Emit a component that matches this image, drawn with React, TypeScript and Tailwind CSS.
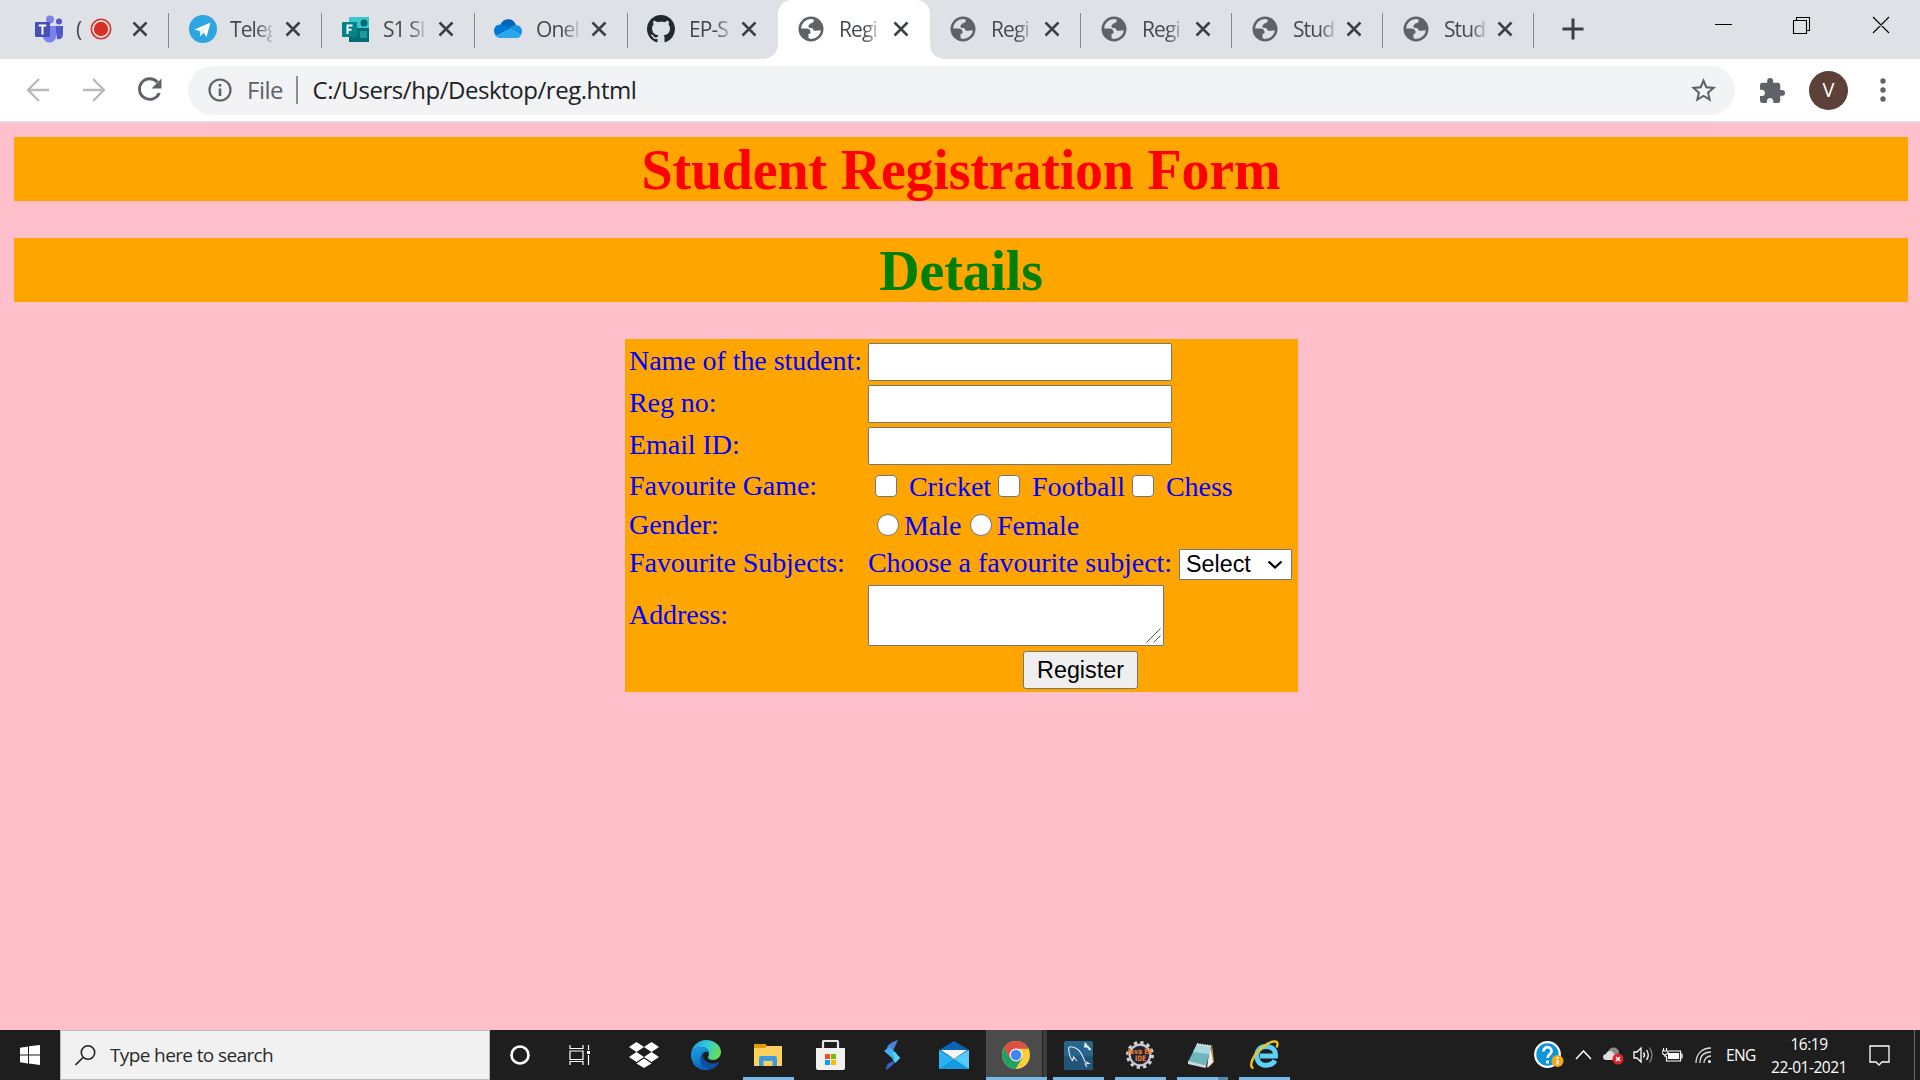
import React from "react";

function Globe() {
  return (
    <svg viewBox="0 0 24 24" className="-ml-0.5 block h-[30px] w-[30px]" fill="#5f6368">
      <circle cx="12" cy="12" r="9" fill="none" stroke="#5f6368" strokeWidth="2" />
      <path d="M14 3.500c.6 2.300 0 3.400-2 3.800-1.500.3-1.200 1.700-2.200 2.200.3 1.500 1.300 1.800 2.900 1.700 1 0 .8 1.900 2.200 2.200 1.900.4 3.700-.7 5.600-.4C21.500 8.500 18.500 4 14 3.500z" />
      <path d="M3 11.500h5.500c2 0 3 1.300 3.200 2.900.1 1-.5 1.600-1.700 1.600v3.200c.6.500 1.300.8 2 1.300C6.500 20.800 2.800 17 3 11.500z" />
    </svg>
  );
}

function Teams() {
  return (
    <svg viewBox="0 0 28 28" className="block h-7 w-7">
      <circle cx="15" cy="4.500" r="4" fill="#7b83eb" />
      <circle cx="24" cy="6.500" r="3" fill="#5059c9" />
      <path d="M20 11h8v8c0 4-2.500 6-6 5z" fill="#5059c9" />
      <path d="M8 11h13v10c0 4-3 6.500-6.500 6.500S8 25 8 21z" fill="#7b83eb" />
      <rect x="0" y="7" width="15" height="15" rx="1" fill="#464eb8" />
      <path d="M3.700 10.500h7.600M7.500 10.500v9" stroke="#fff" strokeWidth="2" />
    </svg>
  );
}

function Telegram() {
  return (
    <svg viewBox="0 0 28 28" className="-ml-px block h-7 w-7">
      <circle cx="14" cy="14" r="14" fill="#2ca5e0" />
      <path d="M5.500 14.500 21.500 7.500 17.500 22l-3-4.500-3 4-.800-5.500z" fill="#fff" />
      <path d="m11 16 6.500-4.500-4 5-2 4.500z" fill="#d5e9f5" />
    </svg>
  );
}

function Forms() {
  return (
    <svg viewBox="0 0 28 26" className="-ml-px block h-[26px] w-7">
      <path d="M7 1h20v25H7z" fill="#036c70" />
      <path d="M7 1h20v11H7z" fill="#37c6d0" />
      <circle cx="22" cy="7" r="3.500" fill="#036c70" />
      <rect x="18" y="15" width="7" height="7" fill="#1a9ba1" />
      <rect x="0" y="6" width="15" height="15" rx="1" fill="#038387" />
      <path d="M5.500 18v-8.500h5M5.500 13.700h4" stroke="#fff" strokeWidth="2" fill="none" />
    </svg>
  );
}

function OneDrive() {
  return (
    <svg viewBox="0 0 28 19" className="-ml-[3px] block h-[19px] w-7">
      <path d="M6.500 5.500c3-7 13-7.500 15.500.8L15 10z" fill="#0364b8" />
      <path d="M6.500 5.500C9.500 5 11 6 17 9.500L2 17C-2 12 .5 5.500 6.500 5.500z" fill="#0078d4" />
      <path d="M22 6.300c5-.3 7.500 5.500 5 9.700l-12-7c2-1.800 4-2.700 7-2.700z" fill="#1490df" />
      <path d="m2 17 14.500-7.500L27 16c-1 2-2 3-4 3H6c-2 0-3-1-4-2z" fill="#28a8ea" />
    </svg>
  );
}

function Github() {
  return (
    <svg viewBox="0 0 16 16" className="-ml-[3px] block h-7 w-7" fill="#24292e">
      <path d="M8 0C3.580 0 0 3.580 0 8c0 3.540 2.290 6.530 5.470 7.590.4.070.55-.17.55-.38 0-.19-.01-.82-.01-1.490-2.010.37-2.530-.49-2.690-.94-.09-.23-.48-.94-.82-1.130-.28-.15-.68-.52-.01-.53.63-.01 1.080.58 1.230.82.72 1.210 1.870.87 2.330.66.07-.52.28-.87.51-1.070-1.780-.2-3.640-.89-3.640-3.950 0-.87.31-1.590.82-2.150-.08-.2-.36-1.020.08-2.120 0 0 .67-.21 2.200.82.64-.18 1.320-.27 2-.27s1.360.09 2 .27c1.530-1.040 2.200-.82 2.200-.82.44 1.100.16 1.920.08 2.120.51.56.82 1.270.82 2.150 0 3.070-1.870 3.750-3.650 3.950.29.25.54.73.54 1.480 0 1.070-.01 1.930-.01 2.200 0 .21.15.46.55.38A8.010 8.010 0 0 0 16 8c0-4.420-3.580-8-8-8z" />
    </svg>
  );
}

function Recording() {
  return (
    <svg viewBox="0 0 22 22" className="ml-1.5 block h-[22px] w-[22px] shrink-0">
      <circle cx="11" cy="11" r="9.700" fill="none" stroke="#d93025" strokeWidth="1.600" />
      <circle cx="11" cy="11" r="7.200" fill="#d93025" />
    </svg>
  );
}

function Close() {
  return (
    <svg viewBox="0 0 16 16" className="block h-4 w-4 shrink-0">
      <path d="M1.500 1.500l13 13M14.500 1.500l-13 13" stroke="#3c4043" strokeWidth="2.500" />
    </svg>
  );
}

interface TabProps {
  icon: React.ReactNode;
  title: string;
  width: string;
  titleWidth?: string;
  separator?: boolean;
  active?: boolean;
  recording?: boolean;
}

function Tab({ icon, title, width, titleWidth = "w-[42px]", separator, active, recording }: TabProps) {
  return (
    <div className={`relative flex h-[59px] shrink-0 items-center pb-0.5 pl-5 pr-[21px] ${width} ${active ? "rounded-t-[14px] bg-white" : ""}`}>
      {active && (
        <>
          <span className="absolute -left-3.5 bottom-0 h-3.5 w-3.5 bg-[radial-gradient(circle_at_0_0,#dee1e6_13.5px,#fff_14px)]" />
          <span className="absolute -right-3.5 bottom-0 h-3.5 w-3.5 bg-[radial-gradient(circle_at_100%_0,#dee1e6_13.5px,#fff_14px)]" />
        </>
      )}
      <span className="flex w-7 shrink-0 justify-center">{icon}</span>
      <span className={`ml-[13px] overflow-hidden whitespace-nowrap [mask-image:linear-gradient(90deg,#000_62%,rgba(0,0,0,0.2))] ${titleWidth}`}>{title}</span>
      {recording && <Recording />}
      <span className="ml-auto"><Close /></span>
      {separator && <span className="absolute right-0 top-[13px] h-[35px] w-[1.5px] bg-[#85898e]" />}
    </div>
  );
}

function TabStrip() {
  return (
    <div className="flex h-[59px] bg-[#dee1e6] pl-[15px] font-['Open_Sans',sans-serif] text-[21px] leading-7 tracking-[-0.9px] text-[#45494d]">
      <Tab icon={<Teams />} title="(" width="w-[154px]" titleWidth="w-[8px]" recording separator />
      <Tab icon={<Telegram />} title="Teleg" width="w-[153px]" separator />
      <Tab icon={<Forms />} title="S1 Sl" width="w-[153px]" separator />
      <Tab icon={<OneDrive />} title="OneD" width="w-[153px]" separator />
      <Tab icon={<Github />} title="EP-S" width="w-[150px]" />
      <Tab icon={<Globe />} title="Regi" width="w-[152px]" titleWidth="w-[40px]" active />
      <Tab icon={<Globe />} title="Regi" width="w-[151px]" titleWidth="w-[40px]" separator />
      <Tab icon={<Globe />} title="Regi" width="w-[151px]" titleWidth="w-[40px]" separator />
      <Tab icon={<Globe />} title="Stud" width="w-[151px]" titleWidth="w-[42px]" separator />
      <Tab icon={<Globe />} title="Stud" width="w-[151px]" titleWidth="w-[42px]" separator />
      <svg viewBox="0 0 22 22" className="ml-7 mt-[18px] block h-[22px] w-[22px]">
        <path d="M11 0.500v21M.500 11h21" stroke="#3c4043" strokeWidth="3" />
      </svg>
      <svg viewBox="0 0 176 18" className="ml-auto mr-[30px] mt-4 block h-[18px] w-[176px]" fill="none" stroke="#000" strokeWidth="1.100">
        <path d="M1 8.500h17M79.500 4.500h13v13h-13zM82.500 4.500v-3h13v13h-3M159 1l16 16M175 1l-16 16" />
      </svg>
    </div>
  );
}

function Toolbar() {
  return (
    <div className="flex h-16 items-center border-b-2 border-[#d9dce0] bg-white pl-[26px] font-['Open_Sans',sans-serif] text-[24px]">
      <svg viewBox="0 0 24 26" className="block h-[26px] w-6" fill="none" stroke="#bababc" strokeWidth="2.400">
        <path d="M23 13H2M13 2 2 13l11 11" />
      </svg>
      <svg viewBox="0 0 24 26" className="ml-8 block h-[26px] w-6" fill="none" stroke="#bababc" strokeWidth="2.400">
        <path d="M1 13h21M11 2l11 11-11 11" />
      </svg>
      <svg viewBox="0 0 26 28" className="ml-[31px] block h-7 w-[26px]">
        <path d="M20.500 6.200A10.300 10.300 0 1 0 22.300 17" fill="none" stroke="#5f6368" strokeWidth="2.900" />
        <path d="M24.500 2.500v10h-10z" fill="#5f6368" />
      </svg>
      <div className="ml-[25px] flex h-[49px] w-[1547px] items-center rounded-full bg-[#f1f3f4] pl-5 pr-[19px]">
        <svg viewBox="0 0 24 24" className="block h-6 w-6" fill="none" stroke="#5f6368" strokeWidth="2.200">
          <circle cx="12" cy="12" r="10.500" />
          <path d="M12 10.500V18M12 6v2.400" strokeWidth="2.600" />
        </svg>
        <span className="ml-[15px] w-[38px] whitespace-nowrap text-[#5f6368] tracking-[-0.5px]">File</span>
        <span className="ml-[11px] h-7 w-[1.5px] bg-[#8b8f94]" />
        <span className="ml-[15px] whitespace-nowrap text-[#202124] tracking-[-0.45px]">C:/Users/hp/Desktop/reg.html</span>
        <svg viewBox="2 2 20 20" className="ml-auto block h-[25px] w-[25px]" fill="#5f6368">
          <path d="M22 9.240l-7.190-.62L12 2 9.190 8.630 2 9.240l5.460 4.730L5.820 21 12 17.270 18.180 21l-1.630-7.030L22 9.240zM12 15.400l-3.760 2.270 1-4.280-3.320-2.880 4.380-.38L12 6.100l1.710 4.040 4.380.38-3.320 2.880 1 4.280L12 15.400z" />
        </svg>
      </div>
      <svg viewBox="2 1 21 21" className="ml-[25px] block h-[25px] w-[25px]" fill="#5f6368">
        <path d="M20.500 11H19V7c0-1.100-.9-2-2-2h-4V3.500a2.500 2.500 0 0 0-5 0V5H4c-1.100 0-1.990.9-1.990 2v3.800H3.500c1.490 0 2.700 1.210 2.700 2.700s-1.210 2.700-2.700 2.700H2V20c0 1.100.9 2 2 2h3.800v-1.500c0-1.490 1.210-2.700 2.700-2.700 1.490 0 2.700 1.210 2.700 2.700V22H17c1.100 0 2-.9 2-2v-4h1.500a2.500 2.500 0 0 0 0-5z" />
      </svg>
      <span className="ml-6 flex h-[39px] w-[39px] items-center justify-center rounded-full bg-[#5d4037] text-[20px] text-white">V</span>
      <svg viewBox="0 0 6 28" className="ml-8 block h-7 w-1.5" fill="#5f6368">
        <circle cx="3" cy="5" r="2.700" />
        <circle cx="3" cy="14" r="2.700" />
        <circle cx="3" cy="23" r="2.700" />
      </svg>
    </div>
  );
}

interface RowProps {
  label: string;
  height: string;
  raised?: boolean;
  children: React.ReactNode;
}

function Row({ label, height, raised, children }: RowProps) {
  return (
    <div className={`flex items-center pl-1 ${height}`}>
      <label className={`w-[239px] shrink-0 whitespace-nowrap ${raised ? "pb-0.5" : ""}`}>{label}</label>
      {children}
    </div>
  );
}

const fieldClass = "h-[38px] w-[304px] rounded-[2px] border-[1.5px] border-[#767676] bg-white px-1 outline-none";

function Check() {
  return <input type="checkbox" className="h-[22px] w-[22px] shrink-0 appearance-none rounded-[4px] border-[1.5px] border-[#767676] bg-white" />;
}

function Radio() {
  return <input type="radio" name="gender" className="h-[22px] w-[22px] shrink-0 appearance-none rounded-full border-[1.5px] border-[#767676] bg-white" />;
}

function RegistrationPage() {
  return (
    <main className="flex h-[907px] flex-col bg-[#ffc0cb] pl-3.5 pr-3 pt-3.5 font-['Liberation_Serif',serif] text-[28px] leading-8 tracking-[-0.06px] text-[#0000ff]">
      <h1 className="h-16 bg-[#ffa500] text-center text-[56px] font-bold leading-[66px] tracking-[-0.2px] text-[#ff0000]">Student Registration Form</h1>
      <h1 className="mt-[37px] h-16 bg-[#ffa500] text-center text-[56px] font-bold leading-[66px] tracking-[-0.2px] text-[#008000]">Details</h1>
      <form className="ml-[611px] mt-[37px] flex h-[353px] w-[673px] flex-col bg-[#ffa500] pt-0.5" onSubmit={(e) => e.preventDefault()}>
        <Row label="Name of the student:" height="h-[42px]" raised><input className={fieldClass} /></Row>
        <Row label="Reg no:" height="h-[42px]" raised><input className={fieldClass} /></Row>
        <Row label="Email ID:" height="h-[42px]" raised><input className={fieldClass} /></Row>
        <Row label="Favourite Game:" height="h-[38px]">
          <div className="flex items-center pl-[7px]">
            <Check /><span className="ml-3 mt-px w-[89px]">Cricket</span>
            <Check /><span className="ml-3 mt-px w-[100px]">Football</span>
            <Check /><span className="ml-3 mt-px">Chess</span>
          </div>
        </Row>
        <Row label="Gender:" height="h-[39px]">
          <div className="flex items-center pl-[9px]">
            <Radio /><span className="ml-[5px] mt-0.5 w-[66px]">Male</span>
            <Radio /><span className="ml-[5px] mt-0.5">Female</span>
          </div>
        </Row>
        <Row label="Favourite Subjects:" height="h-[39px]" raised>
          <span className="w-[311px] whitespace-nowrap pb-0.5">Choose a favourite subject:</span>
          <button type="button" className="mt-0.5 flex h-[31px] w-[113px] items-center justify-between rounded-[1px] border-[1.5px] border-[#767676] bg-white pl-1.5 pr-2 font-['Liberation_Sans',sans-serif] text-[23.330px] leading-none tracking-normal text-black">
            Select
            <svg viewBox="0 0 16 10" className="block h-[10px] w-4" fill="none" stroke="#000" strokeWidth="2.300">
              <path d="m1.500 1.500 6.500 6 6.500-6" />
            </svg>
          </button>
        </Row>
        <Row label="Address:" height="h-[65px]" raised>
          <div className="flex h-[61px] w-[296px] items-end justify-end rounded-[1px] border-[1.5px] border-[#767676] bg-white p-0.5">
            <svg viewBox="0 0 15 15" className="block h-[15px] w-[15px]" stroke="#555" strokeWidth="1">
              <path d="M.500 14.500 14.500.500M7.500 14.500l7-7" />
            </svg>
          </div>
        </Row>
        <button type="submit" className="ml-[398px] mt-[3px] h-[38px] w-[115px] rounded-[3px] border-[1.5px] border-[#767676] bg-[#efefef] pt-0.5 font-['Liberation_Sans',sans-serif] text-[23.330px] leading-none tracking-normal text-black">Register</button>
      </form>
    </main>
  );
}

function Dropbox() {
  return (
    <svg viewBox="0 0 30 26" className="h-[26px] w-[30px]" fill="#fff">
      <path d="m7.500 0 7.500 5-7.500 5L0 5zM22.500 0 30 5l-7.500 5L15 5zM7.500 10l7.500 5-7.500 5L0 15zM22.500 10l7.500 5-7.500 5-7.500-5zM15 16.500l7.500 5-7.500 4.500-7.500-4.500z" />
    </svg>
  );
}

function Edge() {
  return (
    <svg viewBox="0 0 30 30" className="h-[30px] w-[30px]">
      <defs>
        <linearGradient id="edgeTop" x1="0" y1="0.200" x2="1" y2="0.500">
          <stop offset="0" stopColor="#229ddb" /><stop offset="0.500" stopColor="#31c8dc" /><stop offset="1" stopColor="#66e052" />
        </linearGradient>
        <linearGradient id="edgeSide" x1="0" y1="0" x2="0.400" y2="1">
          <stop offset="0" stopColor="#1ca5e6" /><stop offset="1" stopColor="#0b64bd" />
        </linearGradient>
      </defs>
      <path d="M0 14C1 5 8 0 15 0c9 0 15 6 15 12 0 5-4 8-8 8-3 0-5-1-5-2.500 0-1 1-1.500 1-4C18 9 14 7 10 7 5 7 1 10 0 14z" fill="url(#edgeTop)" />
      <path d="M0 15C0 10 5 7 10 7c4 0 8 2 8 6-3-3-8 0-7 6 1 5 5 8 9 10C9 33 0 25 0 15z" fill="url(#edgeSide)" />
      <path d="M11.500 13c-5 6-1 16 7.500 16 4 0 7-3 9-6 0-1-.5-1-1-.7C19 26 11 21 11.500 13z" fill="#104f9e" />
    </svg>
  );
}

function Explorer() {
  return (
    <svg viewBox="0 0 28 24" className="h-6 w-7">
      <path d="M0 1h11l2 2h15v20H0z" fill="#ffd15c" />
      <path d="M0 1h11l2 2-2 2H0z" fill="#e09b00" />
      <path d="M5 23V15q0-2 2-2h14q2 0 2 2v8h-4.500v-5h-9v5z" fill="#3d9be0" />
    </svg>
  );
}

function Store() {
  return (
    <svg viewBox="0 0 29 30" className="h-[30px] w-[29px]">
      <path d="M7 12V2q0-1 1-1h13q1 0 1 1v10" fill="none" stroke="#e6e6e6" strokeWidth="2.200" />
      <path d="M0 8h29v20q0 2-2 2H2q-2 0-2-2z" fill="#f1f1f1" />
      <path d="M9 14h5v5H9z" fill="#f25022" /><path d="M15 14h5v5h-5z" fill="#7fba00" />
      <path d="M9 20h5v5H9z" fill="#00a4ef" /><path d="M15 20h5v5h-5z" fill="#ffb900" />
    </svg>
  );
}

function Swirl() {
  return (
    <svg viewBox="0 0 16 30" className="h-[30px] w-4">
      <path d="M14 0C8 2 4 4 3 8l-1 2 7 1z" fill="#4a7fd8" />
      <path d="m0 11 6-4 4 4 6 7-5 5-3-5z" fill="#3fb0f0" />
      <path d="m8 13 3-1 5 6-5 5-2-3 2-2z" fill="#4bd9f0" />
      <path d="M2 30c0-5 2-8 9-9-1 3-4 6-9 9z" fill="#3a62c8" />
    </svg>
  );
}

function Mail() {
  return (
    <svg viewBox="0 0 30 28" className="-ml-0.5 h-7 w-[30px]">
      <path d="M0 9 15 0l15 9v4H0z" fill="#0a63b5" />
      <path d="M0 9v19h30V9L15 18z" fill="#29b3f0" />
      <path d="m2 9 13 9 13-9z" fill="#f4f4f4" />
      <path d="M30 9v19L15 18z" fill="#55cbfa" />
      <path d="m0 28 15-10 15 10z" fill="#149be2" />
    </svg>
  );
}

function Chrome() {
  return (
    <svg viewBox="0 0 28 28" className="h-7 w-7">
      <circle cx="14" cy="14" r="14" fill="#ffcd40" />
      <path d="M14 14 1.900 7A14 14 0 0 0 13.500 28L20 17.500z" fill="#1da362" />
      <path d="M1.900 7A14 14 0 0 1 26.500 7.700H14L8 17.500z" fill="#dd5144" />
      <circle cx="14" cy="14" r="6.500" fill="#f1f1f1" />
      <circle cx="14" cy="14" r="5.200" fill="#4285f4" />
    </svg>
  );
}

function MySql() {
  return (
    <svg viewBox="0 0 29 29" className="h-[29px] w-[29px]">
      <rect width="29" height="29" rx="2" fill="#28658c" />
      <path d="M0 15h29v12q0 2-2 2H2q-2 0-2-2z" fill="#205579" />
      <path d="M8.500 20C6 17 4 9 5 6.500 7 4.500 12 7 15 9.500c4 4 4 8 6 11l4 2-4 .5 2 3M8.500 20l1-4 3.500 4" fill="none" stroke="#dbe9f2" strokeWidth="1.100" />
      <path d="M21 2l1.500 3.500M20 5.500h3.500l3 3.500" fill="none" stroke="#eef5f9" strokeWidth="2" />
    </svg>
  );
}

function JavaEE() {
  return (
    <svg viewBox="0 0 28 28" className="h-7 w-7 overflow-visible">
      <circle cx="14" cy="14" r="12.500" fill="none" stroke="#d3d3d3" strokeWidth="3" strokeDasharray="3.270 3.270" />
      <circle cx="14" cy="14" r="10.300" fill="#272039" stroke="#c9c9c9" strokeWidth="2.200" />
      <text x="14" y="13.300" textAnchor="middle" fontSize="7.500" fontWeight="bold" fontFamily="DejaVu Sans" textLength="25" lengthAdjust="spacingAndGlyphs" fill="#e8842c">Java EE</text>
      <text x="14.500" y="20" textAnchor="middle" fontSize="7.500" fontWeight="bold" fontFamily="DejaVu Sans" textLength="11" lengthAdjust="spacingAndGlyphs" fill="#e8842c">IDE</text>
    </svg>
  );
}

function Notepad() {
  return (
    <svg viewBox="0 0 28 27" className="-ml-0.5 h-[27px] w-7">
      <path d="m25 2 2 18-6 6z" fill="#c4974b" />
      <path d="m23 4 3 16-6 6z" fill="#f0f0ea" />
      <path d="M10 2 24 4l-5 21L1 20z" fill="#6fb6bd" />
      <path d="M10 2 24 4l-1.800 8L6 10z" fill="#a9d9dc" />
      <path d="m1 19 18 4.500-.5 2.500L1 22z" fill="#d2d9db" />
      <path d="m10 2 14 2" stroke="#e9f1f2" strokeWidth="1.800" strokeDasharray="1.500 1" />
    </svg>
  );
}

function InternetExplorer() {
  return (
    <svg viewBox="0 0 29 30" className="h-[30px] w-[29px]">
      <path d="M25 20.500C22 26 12 27.500 8 21 4.500 13 9 6.500 16 6.500c7 0 10 4.500 9.500 9.500H10" fill="none" stroke="#5fd0f7" strokeWidth="5" />
      <path d="M3.500 28C-2 27 3 14 13 7 20 1 27 0 27.500 3.500c.3 1.500-.5 3-1 4" fill="none" stroke="#f0c31e" strokeWidth="2.400" />
    </svg>
  );
}

function TaskItem({ width, bar, active, children }: { width: string; bar?: string; active?: boolean; children: React.ReactNode }) {
  return (
    <div className={`relative flex h-[50px] shrink-0 items-center justify-center ${width} ${active ? "bg-[#4b4b4b]" : ""}`}>
      {children}
      {bar && <span className={`absolute bottom-0 h-[3px] bg-[#76b9ed] ${bar}`} />}
    </div>
  );
}

function Tray() {
  return (
    <div className="ml-auto flex h-[50px] items-center text-white">
      <svg viewBox="0 0 30 28" className="block h-7 w-[30px]">
        <circle cx="13.500" cy="13.500" r="12.300" fill="#0c96d8" stroke="#fff" strokeWidth="2.200" />
        <path d="M9.500 10.500c0-6 8.500-5.500 8 0-.5 3-4 3-4 6.500M13.500 19.500v3" fill="none" stroke="#fff" strokeWidth="2.700" />
        <circle cx="23.500" cy="20" r="6" fill="#f3a81c" />
        <path d="M23.500 19v4.500M23.500 16v1.800" stroke="#fff" strokeWidth="2" />
      </svg>
      <svg viewBox="0 0 17 10" className="ml-[11px] block h-2.5 w-[17px]" fill="none" stroke="#fff" strokeWidth="1.500">
        <path d="m1 9 7.500-8L16 9" />
      </svg>
      <svg viewBox="0 0 21 18" className="ml-[11px] mt-0.5 block h-[18px] w-[21px]">
        <path d="M5 5C6-1 15-1 16 5l-1 8H4z" fill="#8b8b8b" />
        <path d="M3 13c-4 0-4-6 0-6 1-4 7-4 8 0 4 0 5 6 1 6z" fill="#dedede" />
        <circle cx="15" cy="12" r="5.500" fill="#dc242c" />
        <path d="m13 10 4 4M17 10l-4 4" stroke="#fff" strokeWidth="1.500" />
      </svg>
      <svg viewBox="0 0 21 18" className="ml-[9px] block h-[18px] w-[21px]" fill="none" stroke="#fff" strokeWidth="1.300">
        <path d="M1 6h3l4-4v14l-4-4H1zM10.500 6.500q2 2.500 0 5M13.500 4q3.500 5 0 10" />
        <path d="M16.500 1.500q5 7.500 0 15" stroke="#858585" />
      </svg>
      <svg viewBox="0 0 21 14" className="ml-2 block h-3.5 w-[21px]">
        <path d="M6 5h11v6H6z" fill="#fff" />
        <path d="M4.500 8v5H18.500V3H7M18.500 6H20v4h-1.500M1.500 0v3M4.500 0v3M0 3h6v2L3 7.500 0 5zM3 7v2" fill="none" stroke="#fff" strokeWidth="1.200" />
      </svg>
      <svg viewBox="0 0 17 17" className="ml-3 block h-[17px] w-[17px]" fill="none" stroke="#ddd" strokeWidth="1.300">
        <path d="M1 16C1 7 7 1 16 1M5 16c0-7 4-11 11-11M9 16c0-4 3-7 7-7" />
        <circle cx="14.500" cy="14.500" r="1.500" fill="#fff" stroke="none" />
      </svg>
      <span className="ml-3.5 w-[30px] whitespace-nowrap pt-0.5 text-[15.500px] leading-none tracking-[-0.6px]">ENG</span>
      <div className="ml-3.5 flex w-[78px] flex-col items-center whitespace-nowrap pt-0.5 text-[15.500px] leading-[23px] tracking-[-0.5px]">
        <span>16:19</span>
        <span>22-01-2021</span>
      </div>
      <svg viewBox="0 0 21 21" className="ml-[21px] block h-[21px] w-[21px]" fill="none" stroke="#fff" strokeWidth="1.300">
        <path d="M1 1h19v16h-7l-3 3-3-3H1z" />
      </svg>
      <span className="ml-6 mr-[5px] h-[50px] w-px bg-[#6b6b6b]" />
    </div>
  );
}

function Taskbar() {
  return (
    <div className="flex h-[50px] bg-[#1e1e1e] font-['Open_Sans',sans-serif]">
      <TaskItem width="w-[60px]">
        <svg viewBox="0 0 20 20" className="h-5 w-5" fill="#fff">
          <path d="m0 2.700 8-1.200v8H0zM9 1.300 20 0v9.500H9zM0 10.500h8v8l-8-1.200zM9 10.500h11V20L9 18.600z" />
        </svg>
      </TaskItem>
      <div className="flex h-[50px] w-[430px] items-center border border-[#bcbcbc] bg-[#f1f1f1] pl-3.5 text-[19px] tracking-[-0.62px] text-[#2a2a2a]">
        <svg viewBox="0 0 21 21" className="block h-[21px] w-[21px]" fill="none" stroke="#222" strokeWidth="1.600">
          <circle cx="13" cy="7.500" r="6.700" />
          <path d="M8 12.500.500 20" />
        </svg>
        <span className="ml-3.5">Type here to search</span>
      </div>
      <TaskItem width="w-[60px]">
        <svg viewBox="0 0 20 20" className="h-5 w-5" fill="none" stroke="#fff" strokeWidth="2.600"><circle cx="10" cy="10" r="8.500" /></svg>
      </TaskItem>
      <TaskItem width="w-[60px]">
        <svg viewBox="0 0 21 20" className="-ml-px h-5 w-[21px]" fill="none" stroke="#fff" strokeWidth="1.200">
          <path d="M1 0v3.500h13V0M1 6h13v8.500H1zM1 20v-3.500h13V20M19.500 0v5M19.500 10v10" />
          <path d="M18 6h3v3h-3z" fill="#fff" stroke="none" />
        </svg>
      </TaskItem>
      <TaskItem width="w-[68px]"><Dropbox /></TaskItem>
      <TaskItem width="w-[56px]"><Edge /></TaskItem>
      <TaskItem width="w-[68px]" bar="left-[9px] w-[51px]"><Explorer /></TaskItem>
      <TaskItem width="w-[56px]"><Store /></TaskItem>
      <TaskItem width="w-[68px]"><Swirl /></TaskItem>
      <TaskItem width="w-[57px]"><Mail /></TaskItem>
      <div className="flex w-[64px] shrink-0 pl-[3px]">
        <TaskItem width="w-[56px]" bar="left-0 w-[61px]" active>
          <span className="ml-[3px]"><Chrome /></span>
          <span className="absolute -right-[5px] top-0 h-[47px] w-[5px] border-l border-[#222] bg-[#3d3d3d]" />
        </TaskItem>
      </div>
      <TaskItem width="w-[62px]" bar="left-[6px] w-[51px]"><MySql /></TaskItem>
      <TaskItem width="w-[62px]" bar="left-[6px] w-[51px]"><JavaEE /></TaskItem>
      <TaskItem width="w-[62px]" bar="left-[6px] w-[51px] border-r-[10px] border-[#5688b0]"><Notepad /></TaskItem>
      <TaskItem width="w-[62px]" bar="left-[6px] w-[51px]"><InternetExplorer /></TaskItem>
      <Tray />
    </div>
  );
}

export default function App() {
  return (
    <div className="flex h-[1080px] w-[1920px] flex-col overflow-hidden">
      <TabStrip />
      <Toolbar />
      <RegistrationPage />
      <Taskbar />
    </div>
  );
}
